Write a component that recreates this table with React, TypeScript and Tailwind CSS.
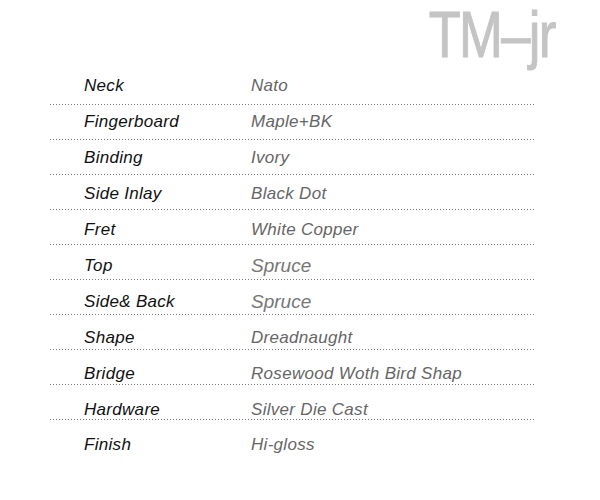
import React from "react";

const rows: { label: string; value: string; big?: boolean; offset: number; line: boolean }[] = [
  { label: "Neck", value: "Nato", offset: 16, line: true },
  { label: "Fingerboard", value: "Maple+BK", offset: 17, line: true },
  { label: "Binding", value: "Ivory", offset: 18, line: true },
  { label: "Side Inlay", value: "Black Dot", offset: 19, line: true },
  { label: "Fret", value: "White Copper", offset: 20, line: true },
  { label: "Top", value: "Spruce", big: true, offset: 21, line: true },
  { label: "Side& Back", value: "Spruce", big: true, offset: 22, line: true },
  { label: "Shape", value: "Dreadnaught", offset: 23, line: true },
  { label: "Bridge", value: "Rosewood Woth Bird Shap", offset: 24, line: true },
  { label: "Hardware", value: "Silver Die Cast", offset: 25, line: true },
  { label: "Finish", value: "Hi-gloss", offset: 25, line: false },
];

export default function App() {
  return (
    <div className="w-[600px] h-[500px] bg-white overflow-hidden font-['Liberation_Sans',Arial,sans-serif]">
      <div className="flex justify-end pr-[45px] h-[70px]">
        <div className="text-[64px] leading-[70px] text-[#c4c4c4] tracking-[-2px] origin-right scale-x-[0.82] [-webkit-text-stroke:1px_#c4c4c4]">
          TM–jr
        </div>
      </div>
      <div className="pl-[50px] w-[535px]">
        {rows.map((r, i) => (
          <div key={i} className="relative h-[35px]" style={{ paddingTop: r.offset - 10 }}>
            <div className="flex items-center h-[20px]">
              <div className="w-[201px] pl-[34px] italic text-[17px] tracking-[0.3px] text-[#111]">{r.label}</div>
              <div className={r.big ? "italic text-[19px] text-[#777]" : "italic text-[17px] tracking-[0.3px] text-[#666]"}>{r.value}</div>
            </div>
            {r.line && (
              <div className="absolute left-0 right-0 bottom-0 h-[1px] bg-[linear-gradient(to_right,#777_1px,transparent_1px)] bg-[length:3px_1px]" />
            )}
          </div>
        ))}
      </div>
    </div>
  );
}
